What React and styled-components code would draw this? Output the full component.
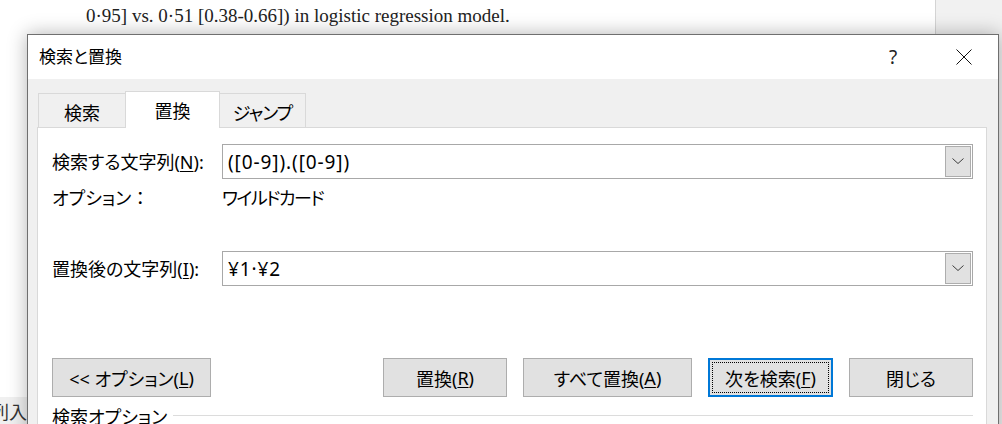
import React from "react";
import styled, { createGlobalStyle } from "styled-components";

const GlobalStyle = createGlobalStyle`
  html, body { margin: 0; padding: 0; }
  body { width: 1002px; height: 424px; overflow: hidden; background: #ffffff; }
`;

const Desktop = styled.div`
  position: relative;
  width: 1002px;
  height: 424px;
  overflow: hidden;
  display: flex;
`;

const DocumentPage = styled.div`
  width: 935px;
  display: flex;
  flex-direction: column;
  background: #ffffff;
`;

const DocLine = styled.div`
  padding: 3px 0 0 86px;
  font-family: "Liberation Serif", "Noto Sans CJK JP", serif;
  font-size: 19px;
  line-height: 26px;
  color: #222;
  white-space: nowrap;
`;

const DocSpacer = styled.div`
  flex: 1;
`;

const Ribbon = styled.div`
  height: 27px;
  background: #f0f0f0;
  font-family: "Noto Sans CJK JP", sans-serif;
  font-size: 18px;
  line-height: 29px;
  color: #333;
  overflow: hidden;
  white-space: nowrap;
`;

const RibbonText = styled.span`
  display: inline-block;
  margin-left: -9px;
`;

const Sidebar = styled.div`
  flex: 1;
  background: #f1f1f1;
  border-left: 1px solid #d4d4d4;
`;

const Dialog = styled.div`
  position: absolute;
  left: 27px;
  top: 34px;
  width: 972px;
  height: 420px;
  box-sizing: border-box;
  border: 1px solid #6f6f6f;
  background: #f0f0f0;
  box-shadow: 0 0 18px rgba(0, 0, 0, 0.3);
  display: flex;
  flex-direction: column;
  font-family: "Noto Sans", "Noto Sans CJK JP", sans-serif;
  font-feature-settings: "palt";
  font-size: 18px;
  color: #000;
`;

const TitleBar = styled.div`
  height: 44px;
  flex: none;
  background: #ffffff;
  display: flex;
  align-items: center;
  padding-left: 11px;
  padding-right: 11px;
`;

const Title = styled.div`
  flex: 1;
  font-size: 17px;
  line-height: 24px;
`;

const TitleControls = styled.div`
  display: flex;
  gap: 25px;
  height: 100%;
`;

const TitleButton = styled.div`
  width: 46px;
  height: 100%;
  display: flex;
  align-items: center;
  justify-content: center;
  font-size: 19px;
  color: #222;
`;

const Body = styled.div`
  flex: 1;
  display: flex;
  flex-direction: column;
  padding: 12px 11px 0 9px;
  min-height: 0;
`;

const TabStrip = styled.div`
  display: flex;
  align-items: flex-end;
  height: 36px;
  padding-left: 1px;
  flex: none;
`;

const Tab = styled.div`
  box-sizing: border-box;
  width: ${(p) => p.$w}px;
  height: ${(p) => (p.$active ? 37 : 34)}px;
  margin: ${(p) => (p.$active ? "0 -1px -1px -1px" : "0")};
  position: relative;
  z-index: ${(p) => (p.$active ? 1 : 0)};
  border: 1px solid #d9d9d9;
  border-bottom: none;
  background: ${(p) => (p.$active ? "#ffffff" : "#f0f0f0")};
  display: flex;
  align-items: center;
  justify-content: center;
  font-size: 18px;
  letter-spacing: ${(p) => (p.$tight ? "-1px" : "0")};
  padding-top: ${(p) => (p.$active ? 0 : 2)}px;
`;

const Panel = styled.div`
  flex: 1;
  background: #ffffff;
  border: 1px solid #d9d9d9;
  border-bottom: none;
  padding: 16px 13px 0 14px;
  display: flex;
  flex-direction: column;
`;

const FieldRow = styled.div`
  display: grid;
  grid-template-columns: 170px 1fr;
  align-items: center;
  height: ${(p) => p.$h || 35}px;
  margin-top: ${(p) => p.$mt || 0}px;
`;

const Label = styled.div`
  font-size: 18px;
  line-height: 24px;
  white-space: nowrap;
  letter-spacing: ${(p) => (p.$tight ? "-1.5px" : "0")};
`;

const FullColon = styled.span`
  font-feature-settings: normal;
`;

const Key = styled.span`
  text-decoration: underline;
  text-underline-offset: 2px;
`;

const ComboBox = styled.div`
  box-sizing: border-box;
  height: 35px;
  border: 1px solid #a8a8a8;
  background: #ffffff;
  padding: 1px;
  display: flex;
`;

const ComboValue = styled.div`
  flex: 1;
  display: flex;
  align-items: center;
  padding-left: 4px;
  font-size: 19px;
  letter-spacing: 0.9px;
  white-space: nowrap;
`;

const DropButton = styled.div`
  box-sizing: border-box;
  width: 26px;
  border: 1px solid #adadad;
  background: #e1e1e1;
  display: flex;
  align-items: center;
  justify-content: center;
`;

const ButtonRow = styled.div`
  display: flex;
  justify-content: space-between;
  margin-top: 72px;
`;

const ButtonGroup = styled.div`
  display: flex;
  gap: 16px;
`;

const Button = styled.div`
  position: relative;
  box-sizing: border-box;
  width: ${(p) => p.$w}px;
  height: 39px;
  border: ${(p) => (p.$focus ? "2px solid #0078d7" : "1px solid #adadad")};
  background: #e1e1e1;
  display: flex;
  align-items: center;
  justify-content: center;
  font-size: 18px;
  white-space: nowrap;
  &::after {
    content: "";
    display: ${(p) => (p.$focus ? "block" : "none")};
    position: absolute;
    inset: 2px;
    border: 1px dotted #000;
  }
`;

const SectionHeader = styled.div`
  display: flex;
  align-items: center;
  gap: 6px;
  height: 24px;
  margin-top: 8px;
`;

const SectionTitle = styled.div`
  font-size: 18px;
  line-height: 24px;
`;

const SectionLine = styled.div`
  flex: 1;
  height: 1px;
  background: #dcdcdc;
  margin-top: -3px;
`;

const Chevron = () => (
  <svg width="12" height="7" viewBox="0 0 12 7">
    <polyline points="0.5,0.5 6,5.5 11.5,0.5" fill="none" stroke="#3c3c3c" strokeWidth="1" />
  </svg>
);

const CloseIcon = () => (
  <svg width="16" height="16" viewBox="0 0 16 16">
    <path d="M0.5 0.5 L15.5 15.5 M15.5 0.5 L0.5 15.5" stroke="#111" strokeWidth="1" fill="none" />
  </svg>
);

export default function App() {
  return (
    <>
      <GlobalStyle />
      <Desktop>
        <DocumentPage>
          <DocLine>0·95] vs. 0·51 [0.38-0.66]) in logistic regression model.</DocLine>
          <DocSpacer />
          <Ribbon>
            <RibbonText>列入</RibbonText>
          </Ribbon>
        </DocumentPage>
        <Sidebar />
        <Dialog>
          <TitleBar>
            <Title>検索と置換</Title>
            <TitleControls>
              <TitleButton>?</TitleButton>
              <TitleButton>
                <CloseIcon />
              </TitleButton>
            </TitleControls>
          </TitleBar>
          <Body>
            <TabStrip>
              <Tab $w={88}>検索</Tab>
              <Tab $w={95} $active>置換</Tab>
              <Tab $w={87} $tight>ジャンプ</Tab>
            </TabStrip>
            <Panel>
              <FieldRow>
                <Label>
                  検索する文字列(<Key>N</Key>):
                </Label>
                <ComboBox>
                  <ComboValue>([0-9]).([0-9])</ComboValue>
                  <DropButton>
                    <Chevron />
                  </DropButton>
                </ComboBox>
              </FieldRow>
              <FieldRow $h={38}>
                <Label>
                  オプション<FullColon>：</FullColon>
                </Label>
                <Label $tight>ワイルドカード</Label>
              </FieldRow>
              <FieldRow $mt={34}>
                <Label>
                  置換後の文字列(<Key>I</Key>):
                </Label>
                <ComboBox>
                  <ComboValue>¥1·¥2</ComboValue>
                  <DropButton>
                    <Chevron />
                  </DropButton>
                </ComboBox>
              </FieldRow>
              <ButtonRow>
                <Button $w={159}>
                  &lt;&lt; オプション(<Key>L</Key>)
                </Button>
                <ButtonGroup>
                  <Button $w={124}>
                    置換(<Key>R</Key>)
                  </Button>
                  <Button $w={169}>
                    すべて置換(<Key>A</Key>)
                  </Button>
                  <Button $w={125} $focus>
                    次を検索(<Key>F</Key>)
                  </Button>
                  <Button $w={124}>閉じる</Button>
                </ButtonGroup>
              </ButtonRow>
              <SectionHeader>
                <SectionTitle>検索オプション</SectionTitle>
                <SectionLine />
              </SectionHeader>
            </Panel>
          </Body>
        </Dialog>
      </Desktop>
    </>
  );
}
